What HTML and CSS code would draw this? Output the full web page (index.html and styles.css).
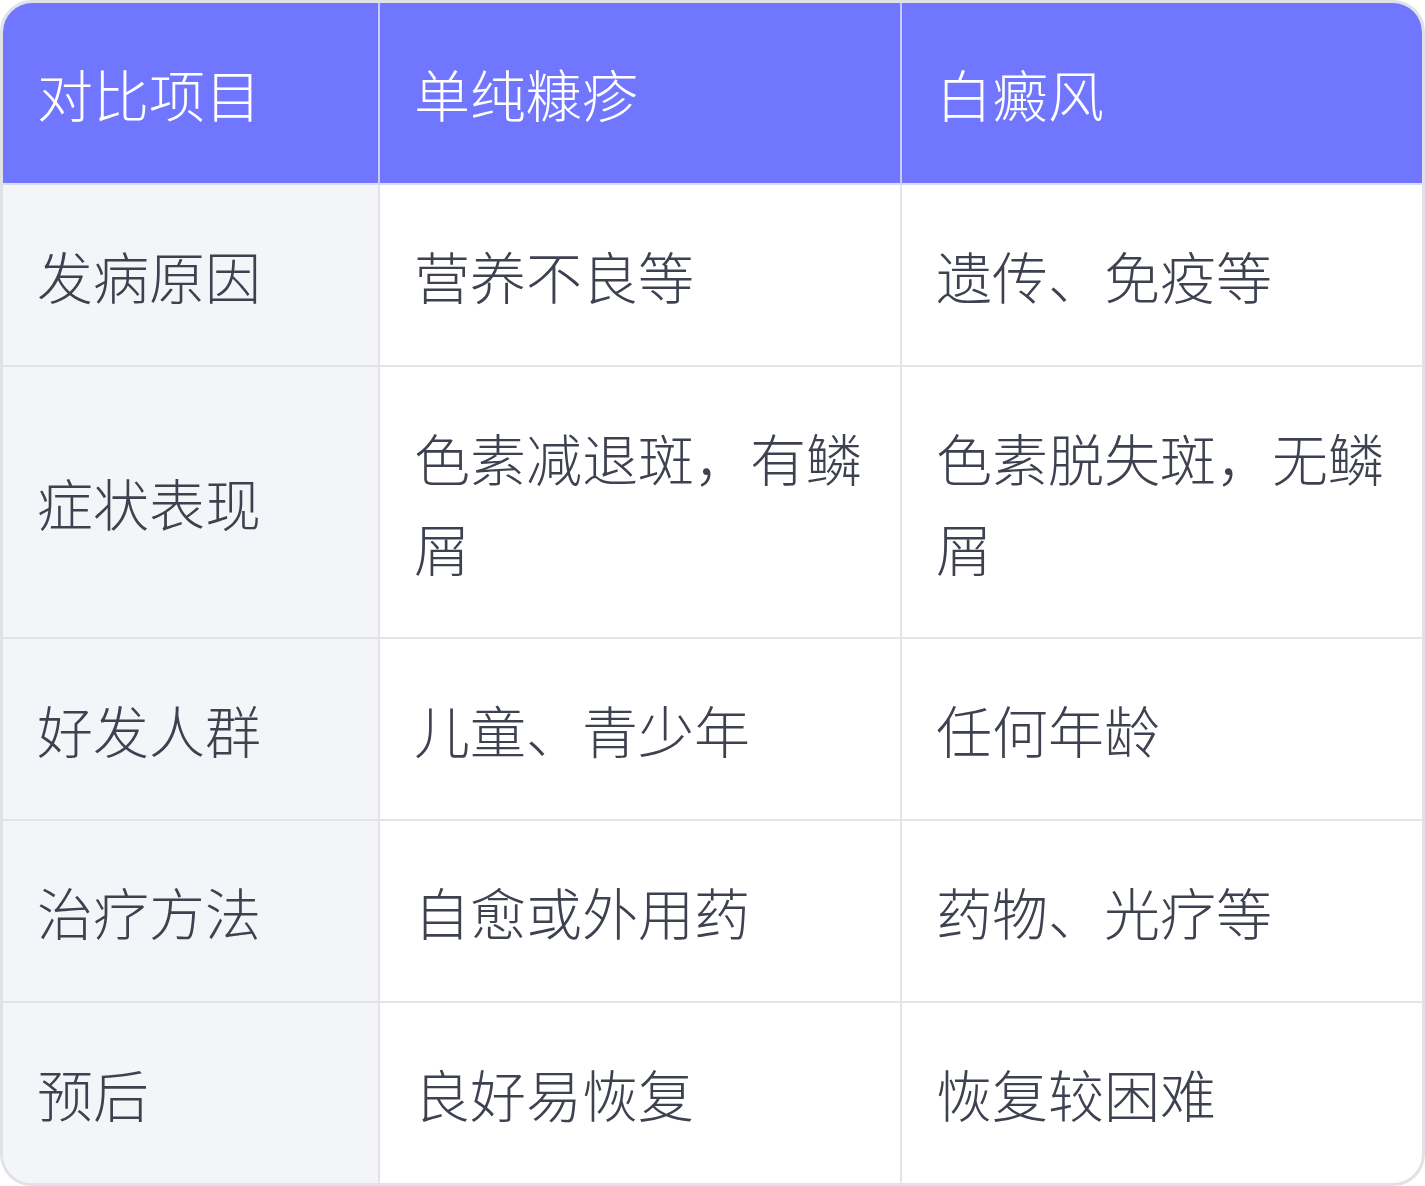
FILE: index.html
```html
<!DOCTYPE html>
<html lang="zh-CN">
<head>
<meta charset="utf-8">
<link rel="stylesheet" href="styles.css">
</head>
<body>
<div class="wrap">
<table class="cmp">
<colgroup><col class="w1"><col class="w2"><col class="w3"></colgroup>
<thead>
<tr><th class="c1">对比项目</th><th class="c2">单纯糠疹</th><th class="c3">白癜风</th></tr>
</thead>
<tbody>
<tr><td class="c1">发病原因</td><td class="c2">营养不良等</td><td class="c3">遗传、免疫等</td></tr>
<tr><td class="c1">症状表现</td><td class="c2">色素减退斑，有鳞屑</td><td class="c3">色素脱失斑，无鳞屑</td></tr>
<tr><td class="c1">好发人群</td><td class="c2">儿童、青少年</td><td class="c3">任何年龄</td></tr>
<tr><td class="c1">治疗方法</td><td class="c2">自愈或外用药</td><td class="c3">药物、光疗等</td></tr>
<tr class="last"><td class="c1">预后</td><td class="c2">良好易恢复</td><td class="c3">恢复较困难</td></tr>
</tbody>
</table>
</div>
</body>
</html>
```
FILE: styles.css
```css
html, body {
  margin: 0;
  padding: 0;
  background: #ffffff;
}
.wrap {
  width: 1425px;
  height: 1186px;
  box-sizing: border-box;
  border: 3px solid #e1e2e7;
  border-radius: 32px;
  overflow: hidden;
  background: #ffffff;
}
.cmp {
  width: 100%;
  border-collapse: separate;
  border-spacing: 0;
  table-layout: fixed;
  font-family: "Noto Sans CJK SC", "Noto Sans", sans-serif;
  font-size: 56px;
  line-height: 90px;
  color: #3e4250;
}
.w1 { width: 377px; }
.w2 { width: 522px; }
.w3 { width: 520px; }
.cmp th, .cmp td {
  box-sizing: border-box;
  text-align: left;
  vertical-align: middle;
  padding: 45px 28px 45px 34px;
  border-right: 2px solid #e3e4e9;
  border-bottom: 2px solid #e3e4e9;
  font-weight: 300;
}
.cmp th.c3, .cmp td.c3 {
  border-right: none;
}
.cmp tr.last td {
  border-bottom: none;
}
.cmp th {
  background: #7176ff;
  color: #ffffff;
  border-right-color: #c9cbf5;
  border-bottom-color: #dcdcf0;
}
.cmp td.c1 {
  background: #f4f5f9;
}
```
